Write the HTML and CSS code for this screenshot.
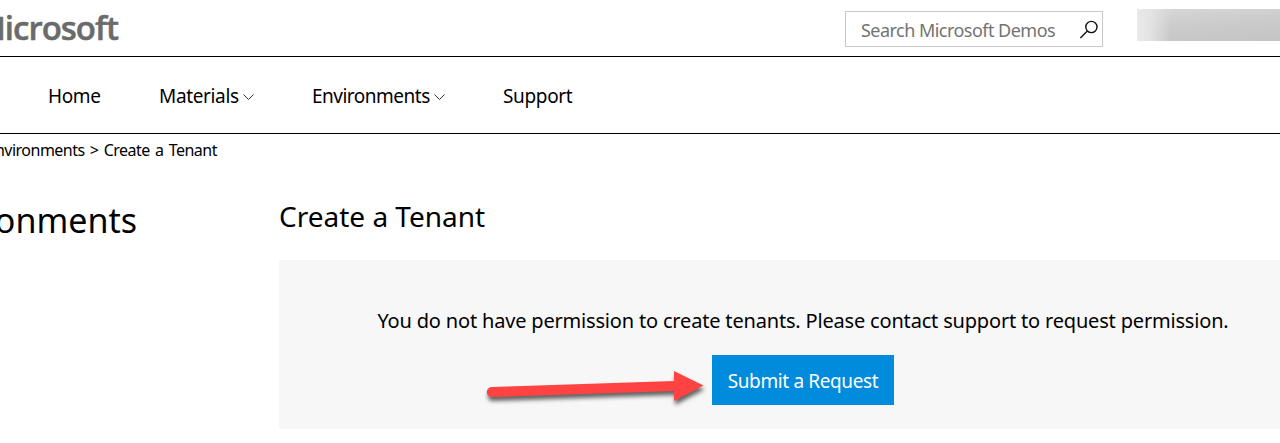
FILE: index.html
```html
<!DOCTYPE html>
<html lang="en">
<head>
<meta charset="utf-8">
<title>Create a Tenant</title>
<link rel="stylesheet" href="styles.css">
</head>
<body>
<header class="top">
  <div class="logo">Microsoft</div>
  <div class="search">
    <span class="search-text">Search Microsoft Demos</span>
    <svg class="search-icon" width="20" height="20" viewBox="0 0 20 20" fill="none" stroke="#111" stroke-width="1.4"><circle cx="12.4" cy="8" r="5.6"/><path d="M8.4 12 1.4 19"/></svg>
  </div>
  <div class="account"></div>
</header>
<nav class="nav">
  <a class="nav-item home">Home</a>
  <a class="nav-item materials">Materials</a>
  <svg class="chevron" width="11" height="8" viewBox="0 0 11 8" fill="none" stroke="#333"><path d="M.5 1.500 5.500 6.500 10.500 1.500"/></svg>
  <a class="nav-item environments">Environments</a>
  <svg class="chevron" width="11" height="8" viewBox="0 0 11 8" fill="none" stroke="#333"><path d="M.5 1.500 5.500 6.500 10.500 1.500"/></svg>
  <a class="nav-item support">Support</a>
</nav>
<div class="breadcrumb"><span>Environments &gt; Create a Tenant</span></div>
<main class="main">
  <aside class="side"><h1 class="side-title">Environments</h1></aside>
  <section class="content">
    <h2 class="title">Create a Tenant</h2>
    <div class="panel">
      <p class="message">You do not have permission to create tenants. Please contact support to request permission.</p>
      <a class="button"><span class="button-text">Submit a Request</span></a>
      <svg class="arrow" width="240" height="60" viewBox="0 0 240 60"><path d="M11.5 27 194 21V11L223.500 25.500 194 41V31L12 37A5 5 0 0 1 11.500 27Z" fill="#ff4343"/></svg>
    </div>
  </section>
</main>
</body>
</html>
```
FILE: styles.css
```css
* { box-sizing: border-box; }
body { margin: 0; height: 443px; overflow: hidden; background: #fff; color: #000; font-family: "Noto Sans", "Open Sans", sans-serif; white-space: nowrap; }
.top { display: flex; height: 57px; border-bottom: 1px solid #000; }
.logo { display: flex; justify-content: flex-end; width: 118px; height: 56px; font: 600 33px/56px "Open Sans", sans-serif; letter-spacing: -1px; color: #6b6b6b; -webkit-text-stroke: 0.5px #6b6b6b; }
.search { display: flex; align-items: center; justify-content: space-between; width: 258px; height: 36px; margin: 11px 0 0 727px; padding: 0 3px 0 15px; border: 1px solid #c8c8c8; }
.search-text { padding-top: 2px; font-size: 18px; color: #737373; letter-spacing: -0.53px; }
.account { width: 143px; height: 32px; margin: 9px 0 0 34px; background: linear-gradient(90deg, #e9e9e9, #e4e4e4 12px, #e2e2e200 34px), linear-gradient(175deg, #d8d8d8, #cbcbcb 50%, #c4c4c4); }
.nav { display: flex; align-items: center; height: 77px; border-bottom: 1px solid #000; padding: 2px 0 0 48px; }
.nav-item { font-size: 19px; line-height: 27px; letter-spacing: -0.35px; }
.home { width: 111px; }
.materials { width: 84px; }
.environments { width: 122px; margin-left: 58px; letter-spacing: -0.5px; }
.support { margin-left: 58px; }
.chevron { margin-top: 2px; }
.breadcrumb { display: flex; justify-content: flex-end; width: 217px; height: 32px; font-size: 16px; line-height: 32px; letter-spacing: -0.5px; word-spacing: 1.500px; }
.main { display: flex; }
.side { width: 279px; }
.side-title { display: flex; justify-content: flex-end; width: 137px; margin: 31px 0 0; font-size: 34px; font-weight: 400; line-height: 46px; }
.content { width: 1001px; padding-top: 30px; }
.title { margin: 0; font-size: 28px; font-weight: 400; line-height: 40px; }
.panel { position: relative; display: flex; flex-direction: column; align-items: center; height: 169px; margin-top: 24px; padding: 45px 0 0 47px; background: #f7f7f7; }
.message { margin: 0; font-size: 20px; line-height: 32px; letter-spacing: -0.18px; }
.button { display: flex; align-items: center; justify-content: center; width: 182px; height: 50px; margin-top: 18px; background: #008bdc; color: #fff; }
.button-text { padding-top: 2px; font-size: 19px; letter-spacing: -0.37px; }
.arrow { position: absolute; left: 201px; top: 100px; filter: drop-shadow(1px 4px 2px #0009); }
```
